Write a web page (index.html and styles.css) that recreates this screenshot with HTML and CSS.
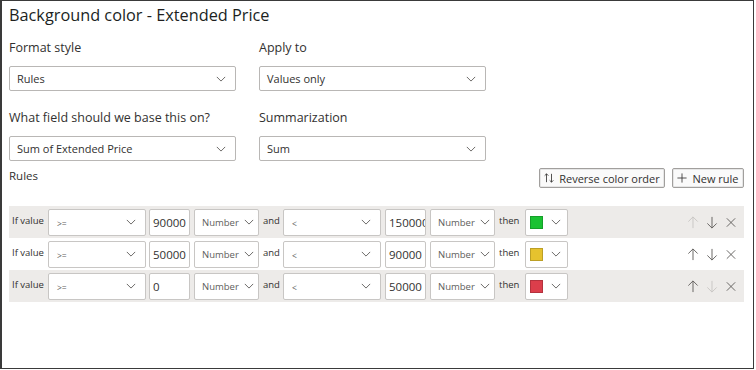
FILE: index.html
```html
<!DOCTYPE html>
<html lang="en">
<head>
  <meta charset="UTF-8" />
  <title>Background color - Extended Price</title>
  <link rel="stylesheet" href="styles.css">
</head>
<body>
  <div class="panel">
    <h1>Background color - Extended Price</h1>

    <!-- Top option fields -->
    <div class="fields">
      <div class="field">
        <div class="label">Format style</div>
        <div class="dropdown"><span>Rules</span><svg class="chev" viewBox="0 0 12 7"><path d="M1 1l5 5 5-5"/></svg></div>
      </div>
      <div class="field">
        <div class="label">Apply to</div>
        <div class="dropdown"><span>Values only</span><svg class="chev" viewBox="0 0 12 7"><path d="M1 1l5 5 5-5"/></svg></div>
      </div>
      <div class="field">
        <div class="label">What field should we base this on?</div>
        <div class="dropdown"><span>Sum of Extended Price</span><svg class="chev" viewBox="0 0 12 7"><path d="M1 1l5 5 5-5"/></svg></div>
      </div>
      <div class="field">
        <div class="label">Summarization</div>
        <div class="dropdown"><span>Sum</span><svg class="chev" viewBox="0 0 12 7"><path d="M1 1l5 5 5-5"/></svg></div>
      </div>
    </div>

    <div class="rules-head">
      <span class="rules-title">Rules</span>
      <div class="actions">
        <button class="btn btn-reverse">
          <svg class="btn-icon" viewBox="0 0 12 12"><path d="M3 11V1M0.8 3.2L3 1l2.2 2.2M9 1v10M6.8 8.8L9 11l2.2-2.2"/></svg>
          Reverse color order
        </button>
        <button class="btn btn-new">
          <svg class="btn-icon" viewBox="0 0 12 12"><path d="M6 0.5v11M0.5 6h11"/></svg>
          New rule
        </button>
      </div>
    </div>

    <!-- Rule rows -->
    <div class="rules">
      <div class="rule shaded">
        <span class="word if">If value</span>
        <div class="box op"><span>&gt;=</span><svg class="chev" viewBox="0 0 12 7"><path d="M1 1l5 5 5-5"/></svg></div>
        <div class="box num">90000</div>
        <div class="box kind"><span>Number</span><svg class="chev" viewBox="0 0 12 7"><path d="M1 1l5 5 5-5"/></svg></div>
        <span class="word and">and</span>
        <div class="box op op2"><span>&lt;</span><svg class="chev" viewBox="0 0 12 7"><path d="M1 1l5 5 5-5"/></svg></div>
        <div class="box num">150000</div>
        <div class="box kind"><span>Number</span><svg class="chev" viewBox="0 0 12 7"><path d="M1 1l5 5 5-5"/></svg></div>
        <span class="word then">then</span>
        <div class="box color"><i class="swatch green"></i><svg class="chev" viewBox="0 0 12 7"><path d="M1 1l5 5 5-5"/></svg></div>
        <div class="tools">
          <svg class="tool off" viewBox="0 0 12 14"><path d="M6 13V1M1 6l5-5 5 5"/></svg>
          <svg class="tool" viewBox="0 0 12 14"><path d="M6 1v12M1 8l5 5 5-5"/></svg>
          <svg class="tool" viewBox="0 0 12 14"><path d="M1.5 2.5l9 9M10.5 2.5l-9 9"/></svg>
        </div>
      </div>
      <div class="rule">
        <span class="word if">If value</span>
        <div class="box op"><span>&gt;=</span><svg class="chev" viewBox="0 0 12 7"><path d="M1 1l5 5 5-5"/></svg></div>
        <div class="box num">50000</div>
        <div class="box kind"><span>Number</span><svg class="chev" viewBox="0 0 12 7"><path d="M1 1l5 5 5-5"/></svg></div>
        <span class="word and">and</span>
        <div class="box op op2"><span>&lt;</span><svg class="chev" viewBox="0 0 12 7"><path d="M1 1l5 5 5-5"/></svg></div>
        <div class="box num">90000</div>
        <div class="box kind"><span>Number</span><svg class="chev" viewBox="0 0 12 7"><path d="M1 1l5 5 5-5"/></svg></div>
        <span class="word then">then</span>
        <div class="box color"><i class="swatch yellow"></i><svg class="chev" viewBox="0 0 12 7"><path d="M1 1l5 5 5-5"/></svg></div>
        <div class="tools">
          <svg class="tool" viewBox="0 0 12 14"><path d="M6 13V1M1 6l5-5 5 5"/></svg>
          <svg class="tool" viewBox="0 0 12 14"><path d="M6 1v12M1 8l5 5 5-5"/></svg>
          <svg class="tool" viewBox="0 0 12 14"><path d="M1.5 2.5l9 9M10.5 2.5l-9 9"/></svg>
        </div>
      </div>
      <div class="rule shaded">
        <span class="word if">If value</span>
        <div class="box op"><span>&gt;=</span><svg class="chev" viewBox="0 0 12 7"><path d="M1 1l5 5 5-5"/></svg></div>
        <div class="box num">0</div>
        <div class="box kind"><span>Number</span><svg class="chev" viewBox="0 0 12 7"><path d="M1 1l5 5 5-5"/></svg></div>
        <span class="word and">and</span>
        <div class="box op op2"><span>&lt;</span><svg class="chev" viewBox="0 0 12 7"><path d="M1 1l5 5 5-5"/></svg></div>
        <div class="box num">50000</div>
        <div class="box kind"><span>Number</span><svg class="chev" viewBox="0 0 12 7"><path d="M1 1l5 5 5-5"/></svg></div>
        <span class="word then">then</span>
        <div class="box color"><i class="swatch red"></i><svg class="chev" viewBox="0 0 12 7"><path d="M1 1l5 5 5-5"/></svg></div>
        <div class="tools">
          <svg class="tool" viewBox="0 0 12 14"><path d="M6 13V1M1 6l5-5 5 5"/></svg>
          <svg class="tool off" viewBox="0 0 12 14"><path d="M6 1v12M1 8l5 5 5-5"/></svg>
          <svg class="tool" viewBox="0 0 12 14"><path d="M1.5 2.5l9 9M10.5 2.5l-9 9"/></svg>
        </div>
      </div>
    </div>
  </div>
</body>
</html>
```

FILE: styles.css
```css
/* Page frame */
body {
  margin: 0;
  background: #fff;
  font-family: 'Open Sans', 'Noto Sans', sans-serif;
  color: #252423;
}
.panel {
  box-sizing: border-box;
  width: 754px;
  height: 369px;
  border: 1px solid #3a3a3a;
  border-left-width: 2px;
  padding: 0 9px 0 7px;
}
h1 {
  margin: 2px 0 0 0;
  font-size: 16.3px;
  font-weight: 400;
  line-height: 24px;
  color: #201f1e;
}
/* Option fields */
.fields {
  display: grid;
  grid-template-columns: 227px 227px;
  column-gap: 23px;
  row-gap: 18px;
  margin-top: 12px;
}
.label {
  font-size: 12.5px;
  line-height: 18px;
  color: #323130;
  margin-bottom: 9px;
}
.dropdown {
  box-sizing: border-box;
  height: 25px;
  border: 1px solid #b9b7b5;
  border-radius: 2px;
  display: flex;
  align-items: center;
  justify-content: space-between;
  padding: 0 9px 0 7px;
  font-size: 11px;
  color: #323130;
}
.chev {
  width: 10px;
  height: 6px;
  flex: none;
  fill: none;
  stroke: #605e5c;
  stroke-width: 1.1;
}
/* Rules header */
.rules-head {
  display: flex;
  justify-content: space-between;
  align-items: flex-start;
  margin-top: 7px;
}
.rules-title {
  font-size: 11.5px;
  line-height: 16px;
  color: #323130;
}
.actions {
  display: flex;
  gap: 7px;
}
.btn {
  box-sizing: border-box;
  height: 20px;
  display: flex;
  align-items: center;
  justify-content: center;
  gap: 5px;
  padding: 0;
  font-family: inherit;
  font-size: 11px;
  color: #323130;
  background: #fafafa;
  border: 1px solid #a19f9d;
  box-shadow: inset 0 0 0 1px #e6e6e6;
  border-radius: 2px;
}
.btn-reverse { width: 126px; }
.btn-new { width: 72px; }
.btn-icon {
  width: 10px;
  height: 10px;
  fill: none;
  stroke: #323130;
  stroke-width: 1;
}
/* Rule rows */
.rules {
  margin-top: 18px;
}
.rule {
  height: 32px;
  display: flex;
  align-items: center;
  padding-left: 3px;
}
.rule.shaded {
  background: #edebe9;
}
.word {
  font-size: 9.5px;
  color: #323130;
  margin-top: -4px;
  white-space: nowrap;
}
.if { width: 36px; }
.and { width: 20px; margin-left: 4px; }
.then { width: 26px; margin-left: 4px; }
.box {
  box-sizing: border-box;
  height: 27px;
  background: #fff;
  border: 1px solid #c8c6c4;
  border-radius: 2px;
  display: flex;
  align-items: center;
  margin-right: 3px;
  flex: none;
}
.op {
  width: 98px;
  justify-content: space-between;
  padding: 0 9px 0 8px;
  font-size: 8.5px;
  color: #605e5c;
}
.op2 { margin-right: 4px; }
.op span { margin-top: 3px; }
.num {
  width: 41px;
  padding-left: 3px;
  font-size: 11.5px;
  color: #323130;
  margin-right: 4px;
  overflow: hidden;
  white-space: nowrap;
}
.kind {
  width: 65px;
  justify-content: space-between;
  padding: 0 4px 0 7px;
  font-size: 9.5px;
  color: #605e5c;
  margin-right: 0;
}
.color {
  width: 43px;
  padding: 0 6px 0 4px;
  justify-content: space-between;
}
.swatch {
  width: 13px;
  height: 13px;
  box-sizing: border-box;
  border: 1px solid rgba(0, 0, 0, 0.18);
}
.green { background: #1ac232; }
.yellow { background: #e6c22e; }
.red { background: #dc3e4b; }
.tools {
  margin-left: auto;
  margin-right: 7px;
  display: flex;
  gap: 7px;
}
.tool {
  width: 12px;
  height: 13px;
  fill: none;
  stroke: #605e5c;
  stroke-width: 1;
}
.tool.off {
  stroke: #c8c6c4;
}
```
